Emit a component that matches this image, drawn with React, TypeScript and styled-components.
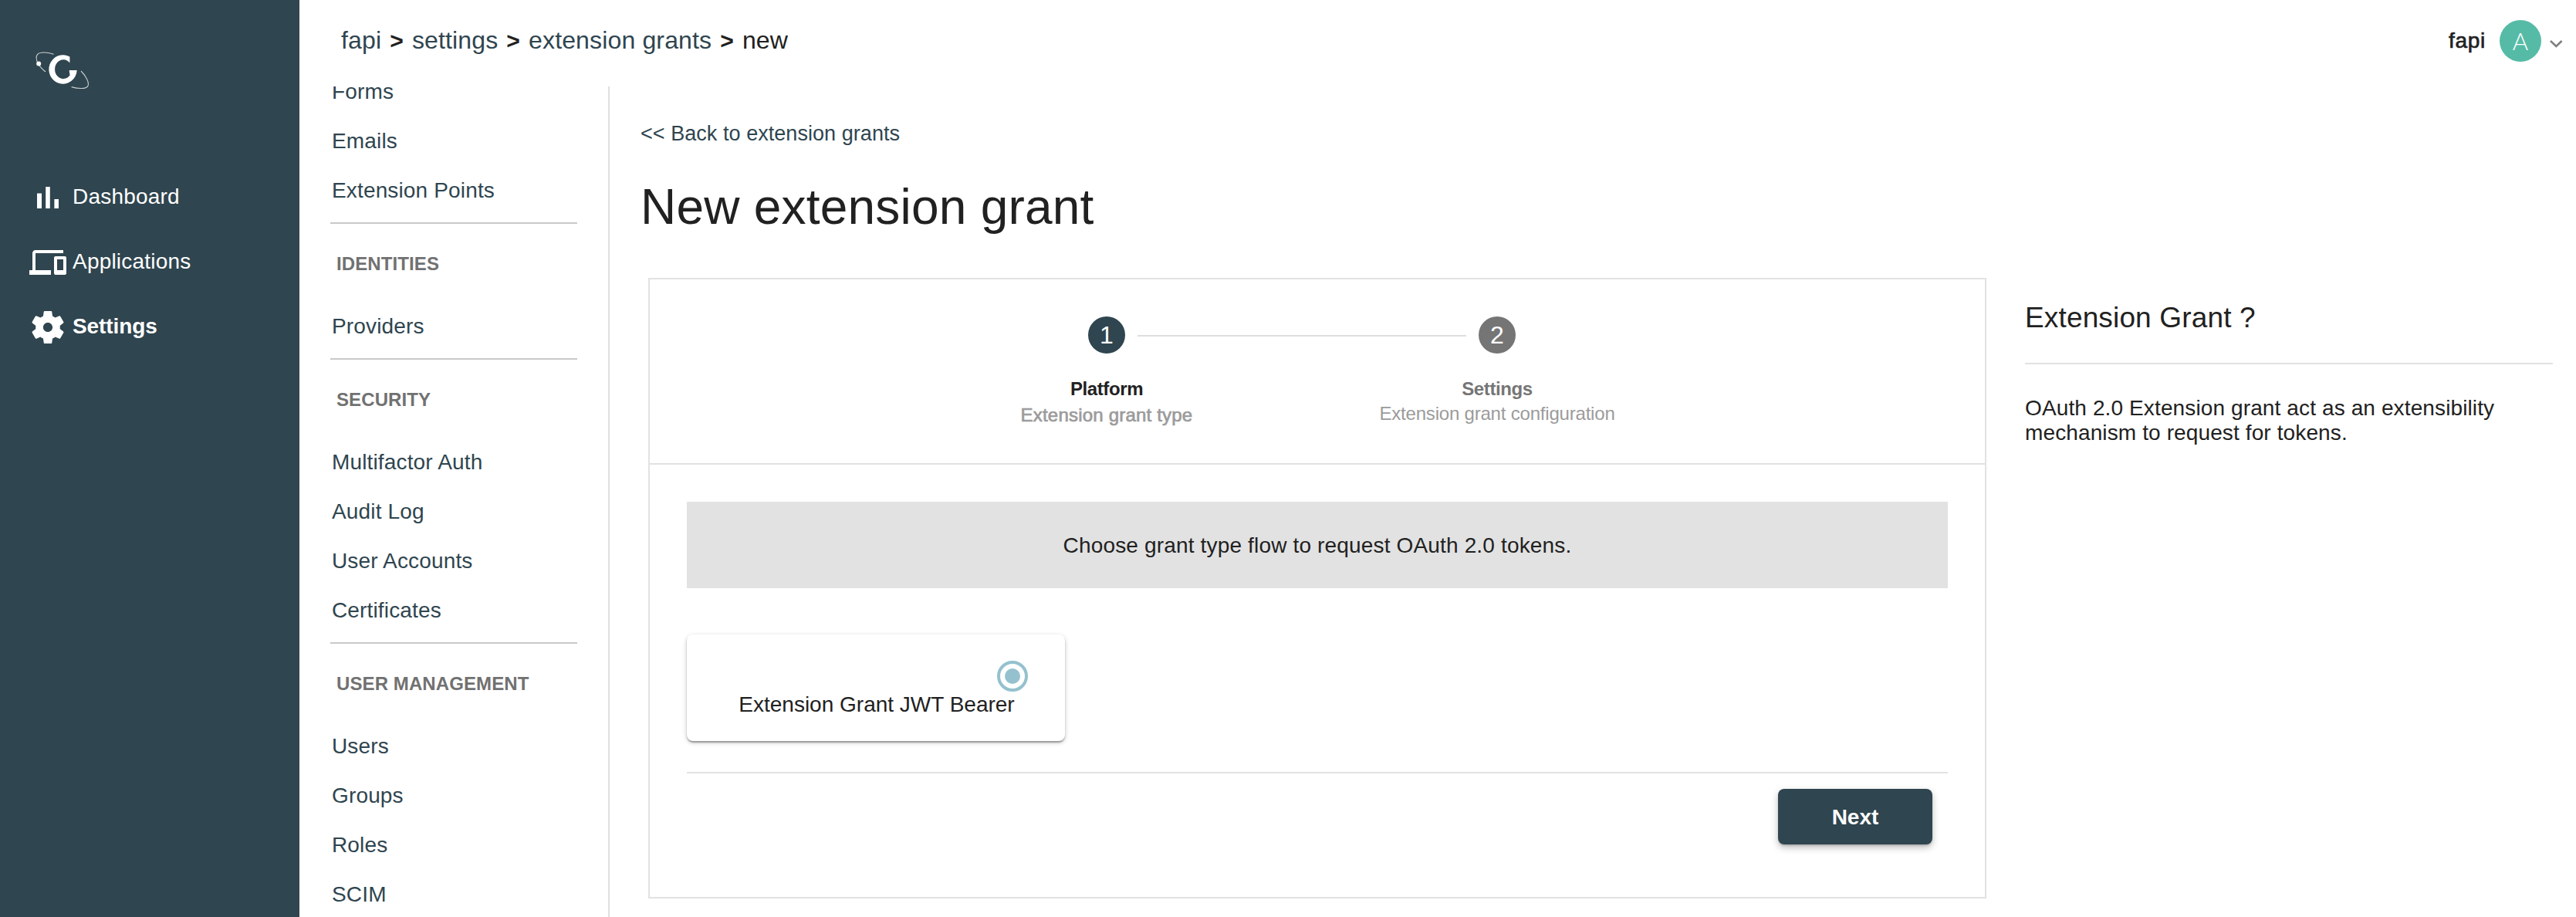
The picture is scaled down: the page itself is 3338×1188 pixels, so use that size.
import React from 'react';
import styled, { createGlobalStyle } from 'styled-components';

const SLATE = '#2f454f';
const INK = '#212121';
const LINE = '#e2e2e2';

const GlobalStyle = createGlobalStyle`
  *, *::before, *::after { box-sizing: border-box; }
  body {
    margin: 0;
    background: #fff;
    color: ${INK};
    font-family: "Liberation Sans", Arial, Helvetica, sans-serif;
    font-size: 28px;
    line-height: 32px;
  }
`;

const Shell = styled.div`
  display: flex;
  width: 3338px;
  height: 1188px;
  overflow: hidden;
`;

const Sidebar = styled.aside`
  flex: none;
  width: 388px;
  background: ${SLATE};
  color: #fff;
`;

const Brand = styled.div`
  height: 214px;
  padding: 60px 0 0 40px;
  svg { display: block; }
`;

const MainNav = styled.nav`
  display: flex;
  flex-direction: column;
  padding-left: 38px;
`;

const MainNavItem = styled.a<{ $active?: boolean }>`
  display: flex;
  align-items: center;
  gap: 8px;
  height: 84px;
  font-weight: ${(p) => (p.$active ? 700 : 400)};
  letter-spacing: ${(p) => (p.$active ? '-0.1px' : '0.2px')};
  svg { flex: none; width: 48px; height: 48px; fill: #fff; overflow: visible; }
  span { padding-bottom: 3px; }
`;

const Workspace = styled.div`
  display: flex;
  flex-direction: column;
  flex: 1;
  min-width: 0;
`;

const TopBar = styled.header`
  display: flex;
  align-items: center;
  justify-content: space-between;
  flex: none;
  height: 112px;
  padding: 0 16px 7px 54px;
`;

const Breadcrumb = styled.div`
  display: flex;
  gap: 11px;
  font-size: 32px;
  line-height: 40px;
  letter-spacing: 0.15px;
  a { color: ${SLATE}; }
`;

const Separator = styled.span`
  padding-top: 1px;
  font-size: 30px;
  font-weight: 700;
`;

const Account = styled.div`
  display: flex;
  align-items: center;
`;

const AccountName = styled.span`
  margin-right: 18px;
  letter-spacing: 0.7px;
  -webkit-text-stroke: 0.7px ${INK};
`;

const Avatar = styled.span`
  display: flex;
  align-items: center;
  justify-content: center;
  width: 54px;
  height: 54px;
  margin-right: 10px;
  border-radius: 50%;
  background: #56bba6;
  color: #fff;
  font-family: Lato, "Liberation Sans", sans-serif;
  font-weight: 300;
  font-size: 31px;
`;

const Caret = styled.svg`
  display: block;
  margin-top: 8px;
`;

const Body = styled.div`
  display: flex;
  flex: 1;
  min-height: 0;
`;

const SettingsNav = styled.nav`
  flex: none;
  width: 402px;
  overflow: hidden;
  padding: 0 40px;
  border-right: 2px solid #e0e0e0;
`;

const SettingsScroll = styled.div`
  margin-top: -26px;
`;

const SettingsGroup = styled.section`
  padding-bottom: 10px;
  & + & { border-top: 2px solid #c9c9c9; }
`;

const SettingsHeading = styled.h2`
  display: flex;
  align-items: center;
  height: 100px;
  margin: 0;
  padding: 3px 0 0 8px;
  color: #717171;
  font-size: 24px;
  font-weight: 700;
  letter-spacing: 0.1px;
`;

const SettingsLink = styled.a`
  display: flex;
  align-items: center;
  height: 64px;
  padding: 2px 0 0 2px;
  color: ${SLATE};
  letter-spacing: 0.15px;
`;

const Page = styled.main`
  flex: 1;
  min-width: 0;
  padding: 41px 30px 0 40px;
`;

const BackLink = styled.a`
  display: block;
  color: ${SLATE};
  font-size: 27px;
  line-height: 40px;
  letter-spacing: 0.05px;
`;

const PageTitle = styled.h1`
  margin: 35px 0 52px;
  font-size: 64px;
  font-weight: 400;
  line-height: 80px;
  letter-spacing: 0.22px;
`;

const Columns = styled.div`
  display: flex;
  align-items: flex-start;
  gap: 50px;
  padding-left: 10px;
`;

const Wizard = styled.section`
  flex: none;
  width: 1734px;
  height: 804px;
  border: 2px solid ${LINE};
`;

const Stepper = styled.div`
  display: flex;
  align-items: flex-start;
  height: 240px;
  padding: 48px 0 0 552px;
  border-bottom: 2px solid ${LINE};
`;

const Step = styled.div`
  display: flex;
  flex-direction: column;
  align-items: center;
  width: 80px;
  white-space: nowrap;
`;

const StepNumber = styled.span<{ $active?: boolean }>`
  display: flex;
  align-items: center;
  justify-content: center;
  width: 48px;
  height: 48px;
  border-radius: 50%;
  background: ${(p) => (p.$active ? SLATE : '#757575')};
  color: #fff;
  font-size: 32px;
`;

const StepTitle = styled.span<{ $active?: boolean }>`
  margin-top: 30px;
  color: ${(p) => (p.$active ? INK : '#757575')};
  font-size: 24px;
  font-weight: 700;
  letter-spacing: -0.4px;
`;

const StepHint = styled.span<{ $active?: boolean }>`
  margin-top: ${(p) => (p.$active ? '2px' : '0')};
  color: #9b9b9b;
  font-size: 24px;
  letter-spacing: ${(p) => (p.$active ? '0.2px' : '-0.2px')};
  -webkit-text-stroke: ${(p) => (p.$active ? '0.7px #9b9b9b' : '0')};
`;

const StepLine = styled.span`
  width: 426px;
  height: 2px;
  margin-top: 24px;
  background: #dedede;
`;

const WizardBody = styled.div`
  display: flex;
  flex-direction: column;
  padding: 48px;
`;

const Banner = styled.div`
  display: flex;
  align-items: center;
  justify-content: center;
  height: 112px;
  padding-top: 1px;
  background: #e2e2e2;
  letter-spacing: 0.16px;
`;

const Option = styled.label`
  display: flex;
  flex-direction: column;
  align-items: center;
  width: 490px;
  height: 138px;
  margin: 60px 0 40px;
  padding-top: 34px;
  border-radius: 8px;
  box-shadow: 0 2px 6px rgba(0, 0, 0, 0.2), 0 2px 2px rgba(0, 0, 0, 0.22), 0 4px 2px -2px rgba(0, 0, 0, 0.12);
`;

const OptionLabel = styled.span`
  padding: 1px 0 0 2px;
`;

const Radio = styled.span`
  display: flex;
  align-items: center;
  justify-content: center;
  align-self: flex-end;
  width: 40px;
  height: 40px;
  margin-right: 48px;
  border: 4px solid #95c1ce;
  border-radius: 50%;
  &::after {
    content: '';
    width: 20px;
    height: 20px;
    border-radius: 50%;
    background: #95c1ce;
  }
`;

const Actions = styled.div`
  display: flex;
  justify-content: flex-end;
  padding: 20px 20px 0 0;
  border-top: 2px solid ${LINE};
`;

const PrimaryButton = styled.button`
  width: 200px;
  height: 72px;
  padding: 1px 0 0;
  border: 0;
  border-radius: 8px;
  background: ${SLATE};
  box-shadow: 0 4px 10px rgba(0, 0, 0, 0.26), 0 2px 2px rgba(0, 0, 0, 0.12);
  color: #fff;
  font: 700 28px/32px "Liberation Sans", Arial, sans-serif;
`;

const Help = styled.aside`
  width: 684px;
  padding-top: 32px;
`;

const HelpTitle = styled.h3`
  margin: 0 0 41px;
  padding-bottom: 38px;
  border-bottom: 2px solid ${LINE};
  font-size: 37px;
  font-weight: 400;
  line-height: 40px;
  letter-spacing: 0.15px;
`;

const HelpText = styled.p`
  margin: 0;
  letter-spacing: 0.12px;
`;

const Logo = () => (
  <svg width="80" height="60" viewBox="39 60 80 60" fill="none">
    <path
      fill="#fff"
      d="M89.4 73.6A18.2 18.7 0 1 0 98.7 91L88.6 91L89.6 97.6A11 12.4 0 1 1 89.4 81.6Z"
    />
    <path
      stroke="#fff"
      strokeOpacity="0.75"
      strokeWidth="1.1"
      d="M68.6 70.2C60 67.6 50.5 67 47.6 70.4C45.6 73 46 78 48.4 82.4C50.6 86.4 54 89.6 58 93M104 92C111 99 115 107.6 112.8 111.6C110.4 115.6 100 115 91.6 112.6"
    />
    <circle cx="49.2" cy="82.4" r="3" fill="#fff" />
  </svg>
);

const mainNav = [
  {
    label: 'Dashboard',
    viewBox: '0 0 24 24',
    path: 'M5 9.2h3V19H5zM10.6 5h2.8v14h-2.8zm5.6 8H19v6h-2.8z',
  },
  {
    label: 'Applications',
    viewBox: '0 0 24 24',
    path: 'M4 6h18V4H4c-1.1 0-2 .9-2 2v11H0v3h14v-3H4V6zm19 2h-6c-.55 0-1 .45-1 1v10c0 .55.45 1 1 1h6c.55 0 1-.45 1-1V9c0-.55-.45-1-1-1zm-1 9h-4v-7h4v7z',
  },
  {
    label: 'Settings',
    active: true,
    viewBox: '0.6 0.6 22.8 22.8',
    path: 'M19.43 12.98c.04-.32.07-.64.07-.98s-.03-.66-.07-.98l2.11-1.65c.19-.15.24-.42.12-.64l-2-3.46c-.12-.22-.39-.3-.61-.22l-2.49 1c-.52-.4-1.08-.73-1.69-.98l-.38-2.65C14.46 2.18 14.25 2 14 2h-4c-.25 0-.46.18-.49.42l-.38 2.65c-.61.25-1.17.59-1.69.98l-2.49-1c-.23-.09-.49 0-.61.22l-2 3.46c-.13.22-.07.49.12.64l2.11 1.65c-.04.32-.07.65-.07.98s.03.66.07.98l-2.11 1.65c-.19.15-.24.42-.12.64l2 3.46c.12.22.39.3.61.22l2.49-1c.52.4 1.08.73 1.69.98l.38 2.65c.03.24.24.42.49.42h4c.25 0 .46-.18.49-.42l.38-2.65c.61-.25 1.17-.59 1.69-.98l2.49 1c.23.09.49 0 .61-.22l2-3.46c.12-.22.07-.49-.12-.64l-2.11-1.65zM12 14.9c-1.6 0-2.9-1.3-2.9-2.9s1.3-2.9 2.9-2.9 2.9 1.3 2.9 2.9-1.3 2.9-2.9 2.9z',
  },
];

const settingsGroups = [
  { title: '', items: ['Forms', 'Emails', 'Extension Points'] },
  { title: 'IDENTITIES', items: ['Providers'] },
  { title: 'SECURITY', items: ['Multifactor Auth', 'Audit Log', 'User Accounts', 'Certificates'] },
  { title: 'USER MANAGEMENT', items: ['Users', 'Groups', 'Roles', 'SCIM'] },
];

export default function App() {
  return (
    <>
      <GlobalStyle />
      <Shell>
        <Sidebar>
          <Brand>
            <Logo />
          </Brand>
          <MainNav>
            {mainNav.map((item) => (
              <MainNavItem key={item.label} $active={item.active}>
                <svg viewBox={item.viewBox}>
                  <path d={item.path} />
                </svg>
                <span>{item.label}</span>
              </MainNavItem>
            ))}
          </MainNav>
        </Sidebar>
        <Workspace>
          <TopBar>
            <Breadcrumb>
              <a>fapi</a>
              <Separator>&gt;</Separator>
              <a>settings</a>
              <Separator>&gt;</Separator>
              <a>extension grants</a>
              <Separator>&gt;</Separator>
              <span>new</span>
            </Breadcrumb>
            <Account>
              <AccountName>fapi</AccountName>
              <Avatar>A</Avatar>
              <Caret width="19" height="12" viewBox="0 0 19 12" fill="none">
                <path d="M2 2L9.3 9L16.6 2" stroke="#808080" strokeWidth="2.6" />
              </Caret>
            </Account>
          </TopBar>
          <Body>
            <SettingsNav>
              <SettingsScroll>
                {settingsGroups.map((group) => (
                  <SettingsGroup key={group.title}>
                    {group.title && <SettingsHeading>{group.title}</SettingsHeading>}
                    {group.items.map((item) => (
                      <SettingsLink key={item}>{item}</SettingsLink>
                    ))}
                  </SettingsGroup>
                ))}
              </SettingsScroll>
            </SettingsNav>
            <Page>
              <BackLink>&lt;&lt; Back to extension grants</BackLink>
              <PageTitle>New extension grant</PageTitle>
              <Columns>
                <Wizard>
                  <Stepper>
                    <Step>
                      <StepNumber $active>1</StepNumber>
                      <StepTitle $active>Platform</StepTitle>
                      <StepHint $active>Extension grant type</StepHint>
                    </Step>
                    <StepLine />
                    <Step>
                      <StepNumber>2</StepNumber>
                      <StepTitle>Settings</StepTitle>
                      <StepHint>Extension grant configuration</StepHint>
                    </Step>
                  </Stepper>
                  <WizardBody>
                    <Banner>Choose grant type flow to request OAuth 2.0 tokens.</Banner>
                    <Option>
                      <Radio />
                      <OptionLabel>Extension Grant JWT Bearer</OptionLabel>
                    </Option>
                    <Actions>
                      <PrimaryButton>Next</PrimaryButton>
                    </Actions>
                  </WizardBody>
                </Wizard>
                <Help>
                  <HelpTitle>Extension Grant ?</HelpTitle>
                  <HelpText>
                    OAuth 2.0 Extension grant act as an extensibility mechanism to request for tokens.
                  </HelpText>
                </Help>
              </Columns>
            </Page>
          </Body>
        </Workspace>
      </Shell>
    </>
  );
}
